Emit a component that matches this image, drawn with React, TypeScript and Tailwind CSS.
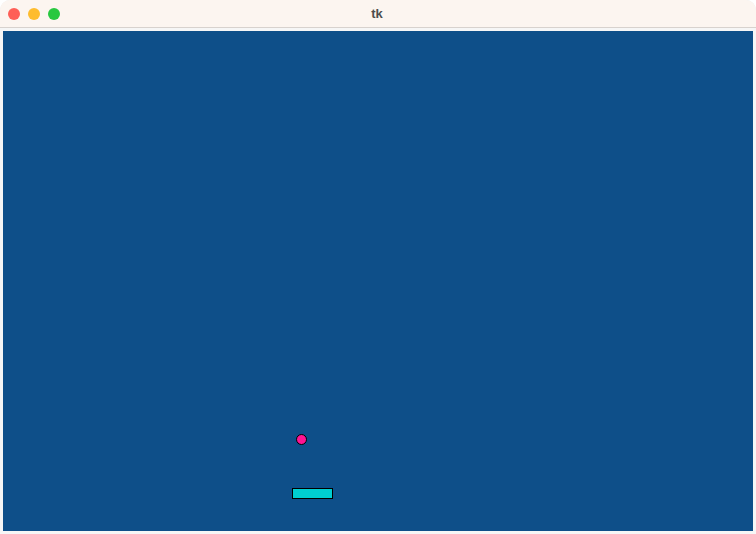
import React from "react";

const Ball = () => (
  <div className="absolute left-[293px] top-[403px] w-[11px] h-[11px] rounded-full bg-[#ff1493] border border-black" />
);

const Paddle = () => (
  <div className="absolute left-[289px] top-[457px] w-[41px] h-[11px] bg-[#00ced1] border border-black" />
);

export default function App() {
  return (
    <div className="w-[756px] h-[534px] bg-[#ececec] overflow-hidden rounded-t-[10px] flex flex-col" style={{ fontFamily: '"Liberation Sans", Arial, sans-serif' }}>
      <div className="h-[28px] shrink-0 bg-[#fcf5f0] border-b border-[#d8d2ce] flex items-center relative">
        <div className="flex gap-[8px] pl-[8px]">
          <span className="w-[12px] h-[12px] rounded-full bg-[#fe5f57]" />
          <span className="w-[12px] h-[12px] rounded-full bg-[#febc2e]" />
          <span className="w-[12px] h-[12px] rounded-full bg-[#28c840]" />
        </div>
        <div className="absolute inset-0 flex items-center justify-center pr-[2px] text-[13px] font-bold text-[#4d4d4d]">tk</div>
      </div>
      <div className="flex-1 bg-[#f6f6f6] pt-[3px] px-[3px]">
        <div className="relative w-[750px] h-[500px] bg-[#0e4f89]">
          <Ball />
          <Paddle />
        </div>
      </div>
    </div>
  );
}
